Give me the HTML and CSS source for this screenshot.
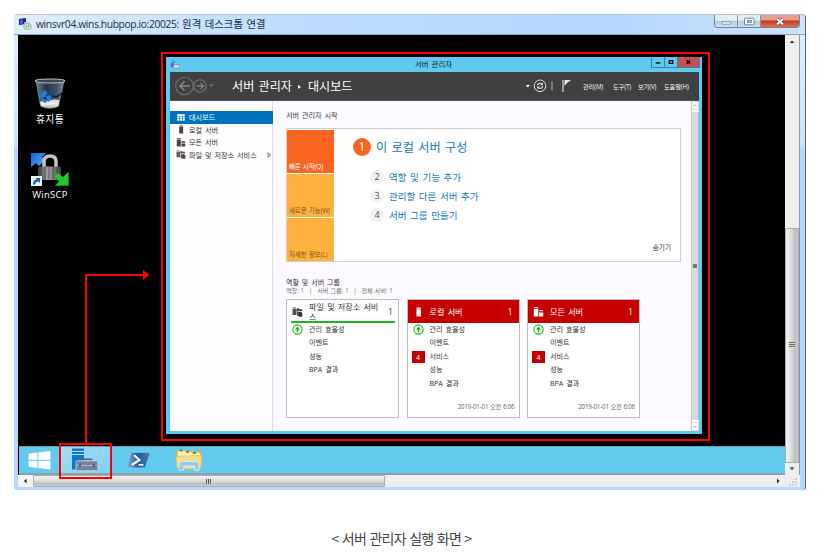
FILE: index.html
```html
<!DOCTYPE html>
<html lang="ko">
<head>
<meta charset="utf-8">
<title>서버 관리자 실행 화면</title>
<link rel="stylesheet" href="styles.css">
</head>
<body>
<svg width="0" height="0" class="defs" aria-hidden="true">
  <defs>
    <symbol id="server" viewBox="0 0 10 10"><path fill="currentColor" d="M3 .5h4.400v1.200H3zM3 2.300h4.400v7.200H3z"/></symbol>
    <symbol id="servers" viewBox="0 0 10 10"><path fill="currentColor" d="M.3.3h4.500v1H.3zM.3 1.900h4.500v7.600H.3zM5.500 3.200h4.200v.9H5.500zM5.500 4.700h4.200v.8H5.500zM5.500 6h4.200v3.500H5.500z"/></symbol>
    <symbol id="files" viewBox="0 0 10 10"><path fill="currentColor" opacity=".85" d="M0 .5h3.400v1H0zM0 2h4v6H0zM4.200 1.200h2l.6.8H9.600v2H4.200zM4.500 4.600h2V9h-2z"/><path fill="currentColor" d="M6.300 4.800h2.200l1.300 1.300v3.700H6.300z"/></symbol>
    <symbol id="up" viewBox="0 0 10 10"><circle cx="5" cy="5" r="4.200" fill="#fff" stroke="#17bd22" stroke-width="1"/><path d="M5 7.500V3.500" fill="none" stroke="#10ad1b" stroke-width="1.400"/><path d="M2.800 5L5 2.400 7.200 5z" fill="#10ad1b"/></symbol>
  </defs>
</svg>
<figure class="figure">
<section class="rdp">
  <header class="rdp-title">
    <svg class="rdp-icon" viewBox="0 0 13 12"><path fill="#12239c" d="M0 1l7-1v6l-7 1z"/><path fill="#4867d6" d="M1 2l3-.5v4L1 6z"/><path fill="#b4bac4" d="M5 4l6 1v5l-6-1z"/><ellipse cx="8.600" cy="8.600" rx="4" ry="2.900" fill="#dfe6dc" stroke="#8c9a8c" stroke-width=".7"/><path d="M6 8.800l2-1v2zM11 8l-2-1v2z" fill="#27a82a"/></svg>
    <span class="rdp-name">winsvr04.wins.hubpop.io:20025: <span class="rdp-ko">원격 데스크톱 연결</span></span>
    <div class="rdp-buttons">
      <i><svg viewBox="0 0 24 13"><rect x="7.500" y="6.800" width="9.500" height="2.600" rx=".7" fill="#fff" stroke="#65758d" stroke-width=".8"/></svg></i>
      <i><svg viewBox="0 0 22 13"><rect x="6.500" y="3.200" width="9.500" height="6.600" rx=".7" fill="#fff" stroke="#65758d" stroke-width=".9"/><rect x="9.300" y="5.500" width="4" height="2" fill="#b4c9e0" stroke="#65758d" stroke-width=".8"/></svg></i>
      <i class="red"><svg viewBox="0 0 40 13"><path d="M17 3.800l6 5.500M23 3.800l-6 5.500" stroke="#6b4350" stroke-width="3.600"/><path d="M17 3.800l6 5.500M23 3.800l-6 5.500" stroke="#fff" stroke-width="2.200"/></svg></i>
    </div>
  </header>
  <div class="rdp-body">
    <div class="desktop">
      <div class="shortcut bin">
        <svg viewBox="0 0 32 34"><defs><linearGradient id="g1"><stop stop-color="#718592"/><stop offset=".35" stop-color="#253848"/><stop offset=".75" stop-color="#39536a"/><stop offset="1" stop-color="#8293a0"/></linearGradient><linearGradient id="g4" x2="0" y2="1"><stop stop-color="#c9ccce"/><stop offset=".5" stop-color="#f2f2f2"/><stop offset="1" stop-color="#a3a6a8"/></linearGradient></defs><path d="M2 3l4.500 25q9 4.500 18 0L30 3z" fill="url(#g1)" stroke="#7d8f9b" stroke-width=".7"/><path d="M6 24q4-3 8-1 6-3 11.500-1l-1.300 6.500q-8 3.500-17 0z" fill="url(#g4)"/><path d="M1 3q0-2 15-2t15 2-15 2S1 5 1 3z" fill="#3b4650" stroke="#bac2c7" stroke-width="1"/><path d="M7 15l4-3 3 4-2 .5 1 3-3-1-2 2-2-3zM6 19l3 5 3 1 1-3-3-1zM13 18l3-1 2 4-4 3-1-2z" fill="#2876dc"/><path d="M29.500 14l-7 5-4-1" fill="none" stroke="#10191f" stroke-width="1.300"/></svg>
        <span>휴지통</span>
      </div>
      <div class="shortcut scp">
        <svg viewBox="0 0 40 34"><defs><linearGradient id="g2"><stop stop-color="#3e3e3e"/><stop offset=".45" stop-color="#a7a7a7"/><stop offset="1" stop-color="#3c3c3c"/></linearGradient><linearGradient id="g5" x2="1" y2="1"><stop stop-color="#1163d8"/><stop offset="1" stop-color="#5ab0fa"/></linearGradient></defs><path d="M1 1h15l-4 4 3 3-6 6-3-3-5 4z" fill="url(#g5)"/><path d="M14 16V9.500q0-5.500 6-5.500t6 5.500V16" fill="none" stroke="#c4c4c4" stroke-width="3.600"/><rect x="8" y="14.500" width="23" height="13.500" rx="2" fill="url(#g2)"/><path d="M11 15v12M15 15v12M19 15v12M23 15v12M27 15v12" stroke="#454545" stroke-width=".8"/><path d="M24 24l4-3 5 4 5.500-5v13.500H25l4-4z" fill="#22c628"/><path d="M38.500 20v13.500H25" fill="none" stroke="#128e1c" stroke-width=".8"/><rect x="1" y="24" width="11" height="10" fill="#eaf2fb"/><path d="M3 32.500q0-5 4-5L5.500 26H10v5l-1.500-1.500q-3 0-3.500 3z" fill="#1560b6"/></svg>
        <span>WinSCP</span>
      </div>

      <article class="app">
        <header class="app-title">
          <svg class="app-icon" viewBox="0 0 10 9"><path d="M1 0h4v3H1z" fill="#1464b4"/><path d="M1 1h4M1 3h3v4" stroke="#fff" stroke-width=".8"/><path d="M1 3h2.500v4H1z" fill="#2875bd"/><rect x="3.400" y="4.600" width="5.800" height="3.400" fill="#d3dce5" stroke="#6c7f96" stroke-width=".6"/></svg>
          <span class="app-name">서버 관리자</span>
          <div class="app-buttons">
            <i><svg viewBox="0 0 13 10"><path d="M4 6h5" stroke="#000" stroke-width="1.500"/></svg></i>
            <i><svg viewBox="0 0 13 10"><path d="M4.500 3.500h4v3h-4z" fill="none" stroke="#000" stroke-width="1.200"/></svg></i>
            <i class="red"><svg viewBox="0 0 22 10"><path d="M9 3.200l3.600 3.600M12.600 3.200L9 6.800" stroke="#220000" stroke-width="1.300"/></svg></i>
          </div>
        </header>
        <nav class="app-head">
          <svg class="nav-icons" viewBox="0 0 44 22"><g fill="none" stroke="#757575" stroke-width="1.100"><circle cx="11.500" cy="11" r="8.800"/><circle cx="27" cy="11" r="6.200"/></g><path d="M17 11H7M11.500 6.500L7 11l4.500 4.500" fill="none" stroke="#858585" stroke-width="1.600"/><path d="M23.500 11h7M27.500 8l3 3-3 3" fill="none" stroke="#7d7d7d" stroke-width="1.300"/><path d="M36 9.500h5L38.500 12z" fill="#777"/></svg>
          <h1 class="crumb"><span>서버 관리자</span><b></b><span>대시보드</span></h1>
          <svg class="tools" viewBox="0 0 50 22"><path d="M1.800 10h4L3.800 12.500z" fill="#fff"/><g fill="none" stroke="#ddd"><circle cx="16" cy="10.800" r="5.800" stroke-width="1"/><path d="M13.400 10.500q.3-2.300 2.700-2.300 1.500 0 2.300 1.200M18.700 11q-.3 2.400-2.700 2.400-1.500 0-2.300-1.200" stroke-width="1.100"/></g><path d="M18.900 7.500v2.800h-2.800zM13.200 14.200v-2.800H16z" fill="#ddd"/><path d="M28 6.500v9" stroke="#bbb"/><path d="M39 5v12" stroke="#ccc" stroke-width="1.300"/><path d="M40.500 5H47l-4 3-2.500 3z" fill="#e4e4e4"/></svg>
          <div class="menu"><span class="m1">관리(M)</span><span class="m2">도구(T)</span><span class="m3">보기(V)</span><span class="m4">도움말(H)</span></div>
        </nav>
        <div class="app-body">
          <aside class="side">
            <a class="on"><svg viewBox="0 0 10 10"><path d="M.8 1.500h8.400v1.800H.8zM.8 4h2.400v2H.8zM3.800 4h2.400v2H3.800zM6.800 4h2.400v2H6.800zM.8 6.600h2.400v2H.8zM3.800 6.600h2.400v2H3.800zM6.800 6.600h2.400v2H6.800z" fill="#fff"/></svg>대시보드</a>
            <a><svg><use href="#server"/></svg>로컬 서버</a>
            <a><svg><use href="#servers"/></svg>모든 서버</a>
            <a><svg><use href="#files"/></svg>파일 및 저장소 서비스<svg class="more" viewBox="0 0 5 6"><path d="M1 .8L3.800 3 1 5.200z" fill="none" stroke="#555" stroke-width=".8"/></svg></a>
          </aside>
          <main class="main">
            <h2>서버 관리자 시작</h2>
            <section class="welcome">
              <div class="tiles"><span class="t1">빠른 시작(Q)</span><span>새로운 기능(W)</span><span>자세한 정보(L)</span></div>
              <div class="steps">
                <p class="first"><b>1</b>이 로컬 서버 구성</p>
                <p><b>2</b>역할 및 기능 추가</p>
                <p><b>3</b>관리할 다른 서버 추가</p>
                <p><b>4</b>서버 그룹 만들기</p>
              </div>
              <span class="hide">숨기기</span>
            </section>
            <h3>역할 및 서버 그룹</h3>
            <div class="counts"><span>역할: 1</span><i>|</i><span>서버 그룹: 1</span><i>|</i><span>전체 서버: 1</span></div>
            <div class="cards">
              <section class="card ok">
                <header><svg><use href="#files"/></svg><strong>파일 및 저장소 서비스</strong><em>1</em></header>
                <ul><li><svg><use href="#up"/></svg>관리 효율성</li><li>이벤트</li><li>성능</li><li>BPA 결과</li></ul>
              </section>
              <section class="card">
                <header><svg><use href="#server"/></svg><strong>로컬 서버</strong><em>1</em></header>
                <ul><li><svg><use href="#up"/></svg>관리 효율성</li><li>이벤트</li><li><b>4</b>서비스</li><li>성능</li><li>BPA 결과</li></ul>
                <time>2019-01-01 오전 6:06</time>
              </section>
              <section class="card">
                <header><svg><use href="#servers"/></svg><strong>모든 서버</strong><em>1</em></header>
                <ul><li><svg><use href="#up"/></svg>관리 효율성</li><li>이벤트</li><li><b>4</b>서비스</li><li>성능</li><li>BPA 결과</li></ul>
                <time>2019-01-01 오전 6:06</time>
              </section>
            </div>
          </main>
          <div class="app-scroll">
            <svg viewBox="0 0 8 9"><path d="M2 5.500l2-2 2 2" fill="none" stroke="#777" stroke-width=".9"/></svg>
            <span><i></i></span>
            <svg viewBox="0 0 8 9"><path d="M2 3.500l2 2 2-2" fill="none" stroke="#777" stroke-width=".9"/></svg>
          </div>
        </div>
      </article>

      <footer class="taskbar">
        <svg class="win" viewBox="0 0 24 20"><path d="M.5 3l9.300-1.300v7.600H.5zM10.800 1.500L23.500 0v9.300H10.800zM.5 10.300h9.300v7.600L.5 16.500zM10.800 10.300h12.700v9.200l-12.700-1.600z" fill="#fff"/></svg>
        <div class="slot">
          <svg class="mgr" viewBox="0 0 28 24"><path d="M1 .5h12v21H1z" fill="#1576c6"/><path d="M1 3.500h12M1 6.500h12" stroke="#b5dff6" stroke-width="1"/><path d="M11.500 13v-1.700h9V13" fill="none" stroke="#50637d" stroke-width="1.400"/><rect x="5" y="12.800" width="22" height="10" rx="1.500" fill="#71839e" stroke="#d2e2f0" stroke-width=".8"/><path d="M6 17.200q10 1 20 0" fill="none" stroke="#b9c6d6" stroke-width=".8"/><path d="M9 15.800v3M23 15.800v3" stroke="#394a62" stroke-width="1.400"/></svg>
        </div>
        <svg class="ps" viewBox="0 0 26 18"><defs><linearGradient id="g3"><stop stop-color="#86b1d6"/><stop offset=".5" stop-color="#1e5a98"/><stop offset="1" stop-color="#4584bc"/></linearGradient></defs><path d="M6 1h18q1.500 0 1 1.500L20.500 16q-.4 1.200-1.600 1.200H1.500Q.3 17.200.7 16L5 2q.3-1 1-1z" fill="url(#g3)" stroke="#a2c9e6" stroke-width=".8"/><path d="M8.500 4l5.500 5-8 5" fill="none" stroke="#fff" stroke-width="2.200"/><path d="M13 14h5" stroke="#fff" stroke-width="1.700"/></svg>
        <svg class="exp" viewBox="0 0 28 22"><path d="M1 3l1-2h8l1 1h14l2 3v13H2z" fill="#dcb955"/><path d="M3 2h6l2 1h5l2 1h7v5H3z" fill="#fff4b7"/><path d="M1 8q5-2 12-1l14-1-1 13q-12 2-24 0z" fill="#f6dc83" stroke="#d8b95b" stroke-width=".6"/><path d="M4.500 1.500h3" stroke="#25a52a" stroke-width="1.800"/><path d="M11 2.800h3" stroke="#e13d26" stroke-width="1.800"/><path d="M18 4h3" stroke="#1770b8" stroke-width="1.500"/><path d="M4 21.500V15q0-2.500 3-2.500h14q3 0 3 2.500v6.500h-4.500V17h-11v4.500z" fill="#92cdee" stroke="#d7f0fc" stroke-width=".8"/></svg>
      </footer>

      <svg class="marks" viewBox="0 0 767 444"><g fill="none" stroke="#f00" stroke-width="2"><rect x="144" y="18" width="547" height="387"/><rect x="42" y="409" width="51" height="34"/><path d="M68 408V240h59"/></g><path d="M125 235l6.500 5-6.500 5z" fill="#f00"/></svg>
    </div>
    <div class="vscroll">
      <svg viewBox="0 0 14 14"><path d="M4.500 8L7 5.500 9.500 8z" fill="#333"/></svg>
      <span><i></i></span>
      <svg viewBox="0 0 14 12"><path d="M4.500 4.500h5L7 7z" fill="#333"/></svg>
    </div>
    <div class="hscroll">
      <svg viewBox="0 0 15 12"><path d="M8.500 3.500v5L6 6z" fill="#222"/></svg>
      <span><i></i></span>
      <svg class="right" viewBox="0 0 15 12"><path d="M7 3.500v5L9.500 6z" fill="#222"/></svg>
    </div>
    <svg class="corner" viewBox="0 0 14 12"><path d="M10 4h2M7 7h2M10 7h2M4 10h2M7 10h2M10 10h2" stroke="#c4c4c4" stroke-width="1.500"/></svg>
  </div>
</section>
<figcaption>&lt; 서버 관리자 실행 화면 &gt;</figcaption>
</figure>
</body>
</html>
```
FILE: styles.css
```css
* { box-sizing: border-box; margin: 0; padding: 0; }
body { background: #fff; font-family: "Open Sans", "Noto Sans CJK KR", sans-serif; overflow: hidden; }
svg { display: block; flex: none; }
i, em { font-style: normal; }
.defs { position: absolute; }
.figure { padding: 14px; width: 827px; height: 559px; white-space: nowrap; }

/* Remote desktop window */
.rdp { width: 792px; height: 476px; padding: 0 5px 3px 4px; border-radius: 4px 4px 3px 3px; border-top: 1px solid #b9c3ca; border-right: 1px solid #536779; background: linear-gradient(#e0f0ff 0, #cce2fb 130px, #b5d7fd 135px); }
.rdp-title { height: 20px; margin: 0 -5px 0 -4px; padding: 0 5px 0 5px; display: flex; align-items: flex-start; background: linear-gradient(90deg, #dfedfb, #bddcff 35%, #b4d6fd 75%, #cbe3fb); border-radius: 4px 4px 0 0; border-bottom: 1px solid #8ba3b8; }
.rdp-icon { width: 13px; height: 12px; margin: 3px 4px 0 0; }
.rdp-name { font-size: 10.300px; line-height: 18px; color: #23303e; letter-spacing: -.38px; flex: 1; }
.rdp-ko { font-size: 10.400px; letter-spacing: 0; word-spacing: .8px; margin-left: 1px; }
.rdp-buttons { display: flex; height: 13px; border: 1px solid #71869b; border-top: 0; border-radius: 0 0 4px 4px; overflow: hidden; }
.rdp-buttons i { width: 23px; background: linear-gradient(#e2edf7 45%, #b3c8de 50%, #d0dfee); border-right: 1px solid #8798aa; }
.rdp-buttons .red { width: 38px; background: linear-gradient(#e8a191 40%, #c63c25 50%, #dc7150); border: 0; }
.rdp-buttons svg { width: 100%; height: 13px; }
.rdp-body { width: 782px; height: 452px; display: grid; grid-template: 440px 12px / 767px 15px; background: #eee; }
.desktop { position: relative; background: #000; }

.shortcut { position: absolute; width: 64px; display: flex; flex-direction: column; align-items: center; color: #fff; font-size: 9.800px; line-height: 12px; letter-spacing: .3px; }
.bin { left: 0; top: 43px; }
.bin svg { width: 32px; height: 34px; margin-bottom: 2px; }
.scp { left: 0; top: 117px; }
.scp svg { width: 40px; height: 34px; margin-bottom: 3px; }
.scp span { font-size: 9.500px; }

/* Server Manager window */
.app { position: absolute; left: 148px; top: 22px; width: 536px; height: 377px; padding: 0 3px 3px 4px; background: #5fc9ef; color: #333; display: grid; grid-template-rows: 15px 29px 330px; font-size: 7.100px; word-spacing: .16em; }
.app-title { display: flex; margin-right: -1px; }
.app-icon { width: 10px; height: 9px; margin-top: 3px; }
.app-name { flex: 1; text-align: center; padding-left: 36px; line-height: 14px; color: #222; font-size: 7.400px; }
.app-buttons { display: flex; height: 11px; border: 1px solid #44809a; border-top: 0; }
.app-buttons i { width: 13px; border-right: 1px solid #44809a; }
.app-buttons .red { width: 21px; background: #c75050; border: 0; }
.app-buttons svg { width: 100%; height: 10px; }
.app-head { background: #404040; display: flex; align-items: center; color: #fff; border-bottom: 1px solid #555; }
.nav-icons { width: 44px; height: 22px; margin-left: 3px; }
.crumb { font-size: 12.100px; font-weight: 400; display: flex; align-items: center; margin-left: 15px; width: 293px; line-height: 24px; padding-top: 1px; }
.crumb b { border-left: 3.500px solid #fff; border-top: 2.500px solid transparent; border-bottom: 2.500px solid transparent; margin: 0 6.500px; }
.tools { width: 50px; height: 22px; margin-left: -1px; }
.menu { display: flex; font-size: 6.200px; letter-spacing: -.1px; margin-left: 9px; }
.m1 { width: 30px; }
.m2 { width: 25px; }
.m3 { width: 26px; }
.app-body { display: grid; grid-template-columns: 103px 418px 8px; }
.side { background: #fffcff; padding-top: 10px; border-right: 1px solid #ddd; }
.side a { height: 12.500px; display: flex; align-items: center; padding-left: 6px; color: #333; }
.side svg { width: 10px; height: 9px; margin-right: 3px; color: #444; }
.side .on { background: #0072bd; color: #fff; margin-right: -1px; }
.side .more { width: 5px; height: 6px; margin: 0 0 0 auto; }
.main { background: #fdfaff; padding: 7px 0 0 13px; }
.main h2 { font-size: 7.100px; font-weight: 400; line-height: 14px; margin-bottom: 6px; }
.welcome { width: 395px; height: 134px; border: 1px solid #d0d0d0; background: #fff; display: flex; padding: 1px 0 0; }
.tiles { width: 47px; display: grid; grid-template-rows: repeat(3, 43px); gap: 1px; }
.tiles span { background: #ffb140; color: #7d5419; display: flex; align-items: flex-end; padding: 0 0 1px 2px; font-size: 6.500px; line-height: 10px; letter-spacing: -.12px; word-spacing: .08em; }
.tiles .t1 { background: #fa6420; color: #fff; }
.steps { padding: 7px 0 0 35px; color: #1679bd; font-size: 9.500px; }
.steps p { height: 19.200px; display: flex; align-items: center; }
.steps b { width: 14px; height: 14px; border-radius: 50%; background: #f2f0f4; color: #555; font-weight: 400; font-size: 9px; line-height: 14px; text-align: center; margin-right: 5px; }
.steps p:not(.first) { margin-left: 1px; }
.steps .first { font-size: 12.200px; height: 20px; margin: 0 0 10px -16px; }
.steps .first b { width: 18px; height: 18px; line-height: 18px; font-size: 12px; color: #fff; background: #fa6420; }
.hide { margin: auto 9px 8px auto; line-height: 10px; font-size: 6.600px; }
.main h3 { font-size: 7px; font-weight: 400; line-height: 9px; margin-top: 16px; }
.counts { display: flex; font-size: 6.200px; line-height: 8px; color: #777; margin-bottom: 4px; word-spacing: .06em; letter-spacing: -.08px; }
.counts i { width: 13px; text-align: center; }
.cards { display: grid; grid-template-columns: repeat(3, 113px); gap: 7.500px; }
.card { height: 119px; border: 1px solid #bdbdbd; background: #fff; display: flex; flex-direction: column; }
.card header { flex: none; height: 23px; background: #c60000; color: #fff; display: flex; align-items: center; padding: 0 6px 0 5px; font-size: 8.100px; }
.card header svg { width: 11px; height: 10px; margin-right: 6px; }
.card strong { font-weight: 400; line-height: 10px; width: 72px; white-space: normal; word-break: break-all; }
.card em { margin-left: auto; }
.card.ok header { background: none; color: #333; border-bottom: 2px solid #19b81d; padding: 2px 2px 0 1px; margin: 0 3px 0 4px; }
.card ul { list-style: none; flex: 1; }
.card li { height: 13.450px; display: grid; grid-template-columns: 22px 1fr; align-items: center; color: #333; line-height: 13px; }
.card li svg { width: 11px; height: 11px; margin-left: 5px; }
.card li:not(:has(svg, b)) { padding-left: 22px; display: block; }
.card li b { width: 13px; height: 12px; line-height: 12px; margin-left: 4px; background: #c60000; color: #fff; text-align: center; font-weight: 400; }
.card time { text-align: right; padding: 0 4px 5px 0; font-size: 6.200px; line-height: 10px; letter-spacing: -.16px; color: #666; word-spacing: .05em; }
.app-scroll { display: grid; grid-template-rows: 9px 308px 9px; align-content: space-between; background: #fff; border-left: 1px solid #ccc; }
.app-scroll svg { width: 7px; height: 9px; border: 1px solid #ddd; border-left: 0; }
.app-scroll span { background: #dadada; display: grid; place-items: center; border-right: 1px solid #bbb; }
.app-scroll i { width: 4px; height: 4px; background: #777; }

/* Desktop chrome */
.taskbar { position: absolute; left: 1px; right: 0; top: 411px; height: 29px; background: #61caef; border-top: 1px solid #6d99a9; border-bottom: 2px solid #8aa0aa; display: flex; align-items: center; padding-left: 9px; }
.win { width: 23px; height: 19px; }
.slot { width: 50px; height: 26px; margin-left: 10px; padding-left: 10px; background: linear-gradient(135deg, #a4dcf3, #7fd2f1); }
.mgr { width: 28px; height: 24px; margin-top: 1px; }
.ps { width: 25px; height: 18px; margin-left: 15px; }
.exp { width: 28px; height: 22px; margin-left: 24px; }
.marks { position: absolute; left: 0; top: 0; width: 767px; height: 444px; z-index: 2; }
.vscroll { display: grid; grid-template-rows: 192px 235px 12px; align-content: space-between; background: #efefef; border-right: 1px solid #8f9ba7; }
.vscroll svg { width: 14px; height: 14px; }
.vscroll svg:last-child { height: 12px; }
.vscroll span { background: linear-gradient(90deg, #f3f3f3, #e2e2e4 35%, #bdbdc2 80%, #d0d0d3); border: 1px solid #aaa; display: grid; place-items: center; }
.vscroll i { width: 6px; height: 6px; background: repeating-linear-gradient(#666 0 1px, #ddd 1px 2px); }
.hscroll { display: flex; background: #ededed; }
.hscroll svg { width: 15px; height: 12px; background: #f5f5f5; }
.hscroll span { width: 352px; background: linear-gradient(#f1f1f1, #dedede 45%, #bdbdbd 80%, #cfcfcf); border: 1px solid #aaa; display: grid; place-items: center; border-radius: 1px; }
.hscroll i { width: 6px; height: 5px; background: repeating-linear-gradient(90deg, #555 0 1px, #ddd 1px 2px); }
.hscroll .right { margin-left: auto; background: none; }
.corner { width: 14px; height: 12px; }
figcaption { width: 775px; text-align: center; margin-top: 37px; font-family: "Noto Sans CJK KR", sans-serif; font-size: 14px; line-height: 22px; letter-spacing: -.7px; color: #444; }
```
